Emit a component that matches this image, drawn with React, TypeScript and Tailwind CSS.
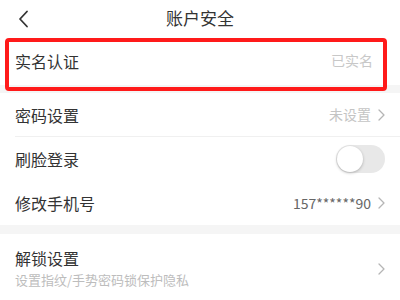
import * as React from "react";

const Chevron = () => (
  <svg width="7" height="12" viewBox="0 0 7 12" className="ml-[7px] shrink-0">
    <path d="M1 1l5 5-5 5" fill="none" stroke="#b5b5b5" strokeWidth="1.3" strokeLinecap="round" strokeLinejoin="round" />
  </svg>
);

const Row = ({ label, children, line }: { label: string; children?: React.ReactNode; line?: boolean }) => (
  <div className="pl-[15px]">
    <div className={`flex h-[44px] items-center pr-[15px] ${line ? "border-b border-[#f0f0f0]" : ""}`}>
      <span className="flex-1 text-[16px] text-[#333]">{label}</span>
      {children}
    </div>
  </div>
);

export default function App() {
  return (
    <div className="h-[300px] w-[400px] overflow-hidden bg-white font-['Noto_Sans_CJK_SC',sans-serif] relative">
      {/* header */}
      <div className="relative flex h-[36px] items-center justify-center">
        <svg width="12" height="18" viewBox="0 0 12 18" className="absolute left-[17px] top-[10px]">
          <path d="M10 1.5L3 9l7 7.5" fill="none" stroke="#333" strokeWidth="1.8" strokeLinecap="round" strokeLinejoin="round" />
        </svg>
        <span className="text-[17px] text-[#333]">账户安全</span>
      </div>

      <div className="flex h-[49px] items-center pl-[15px] pr-[27px]">
        <span className="flex-1 text-[16px] text-[#333]">实名认证</span>
        <span className="text-[14px] text-[#c8c8c8]">已实名</span>
      </div>
      <div className="h-[8px] bg-[#f5f5f5]" />

      <Row label="密码设置" line>
        <span className="text-[14px] text-[#c4c4c4]">未设置</span>
        <Chevron />
      </Row>
      <Row label="刷脸登录">
        <div className="flex h-[28px] w-[49px] items-center rounded-full bg-[#e8e8e8] p-[1px]">
          <div className="h-[26px] w-[26px] rounded-full bg-white shadow-[0_1px_3px_rgba(0,0,0,0.25)]" />
        </div>
      </Row>
      <Row label="修改手机号">
        <span className="text-[14px] text-[#666]">157******90</span>
        <Chevron />
      </Row>
      <div className="h-[9px] bg-[#f5f5f5]" />

      <div className="flex items-center pl-[15px] pr-[15px] pt-[13px]">
        <div className="flex-1">
          <div className="text-[16px] leading-[22px] text-[#333]">解锁设置</div>
          <div className="text-[13px] leading-[22px] text-[#bdbdbd]">设置指纹/手势密码锁保护隐私</div>
        </div>
        <Chevron />
      </div>

      {/* annotation box */}
      <div className="absolute left-[5px] top-[38px] h-[53px] w-[382px] rounded-[4px] border-[4px] border-[#ff1a1a]" />
    </div>
  );
}
